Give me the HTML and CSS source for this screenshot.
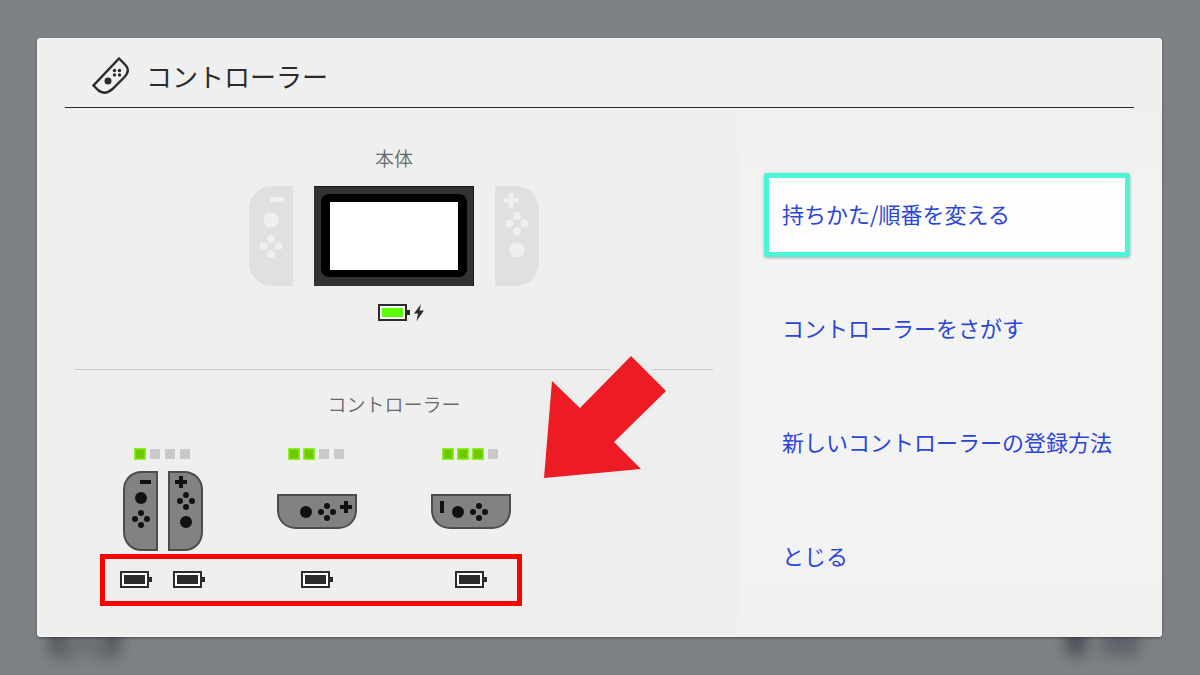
FILE: index.html
```
<!DOCTYPE html>
<html lang="ja">
<head>
<meta charset="UTF-8">
<meta name="viewport" content="width=device-width, initial-scale=1">
<title>コントローラー</title>
<link rel="stylesheet" href="styles.css">
</head>
<body>

<!-- shared shapes -->
<svg class="defs" width="0" height="0" aria-hidden="true">
  <symbol id="dpad" viewBox="0 0 18 18">
    <circle cx="9" cy="3" r="3"/><circle cx="3" cy="9" r="3"/>
    <circle cx="15" cy="9" r="3"/><circle cx="9" cy="15" r="3"/>
  </symbol>
  <symbol id="battery" viewBox="0 0 32 17">
    <rect x="1" y="1" width="27" height="15" fill="#fff" stroke="#2b2b2b" stroke-width="2"/>
    <rect x="29" y="6" width="3" height="5" fill="#2b2b2b"/>
    <rect x="4" y="4" width="21" height="9" fill="currentColor"/>
  </symbol>
</svg>

<div class="backdrop">
  <span class="smudge smudge-a"></span>
  <span class="smudge smudge-b"></span>
  <span class="smudge smudge-c"></span>
  <span class="smudge smudge-d"></span>
  <span class="smudge smudge-e"></span>
</div>

<div class="dialog" role="dialog" aria-labelledby="title">
  <header class="dialog-header">
    <svg class="header-icon" viewBox="0 0 38 38" width="38" height="38" aria-hidden="true">
      <path d="M27 1.500L33 7.500Q39 13.500 32 20.500L20.500 32Q12.500 39 6 33L1.500 28.500Z" fill="none" stroke="#2b2b2b" stroke-width="2.400"/>
      <circle cx="16" cy="24" r="3.500"/>
      <circle cx="22.500" cy="13.500" r="1.700"/><circle cx="27.500" cy="13.500" r="1.700"/>
      <circle cx="22.500" cy="18" r="1.700"/><circle cx="27.500" cy="18" r="1.700"/>
    </svg>
    <h1 id="title">コントローラー</h1>
  </header>

  <div class="dialog-body">
    <main class="status">
      <section class="console">
        <h2>本体</h2>
        <div class="console-row">
          <svg class="detached" viewBox="0 0 44 100" width="44" height="100">
            <path d="M44 0V100H24C10 100 0 90 0 76V24C0 10 10 0 24 0Z" fill="#e0e0e0"/>
            <g fill="#efefef">
              <rect x="21" y="11" width="14" height="5" rx="1"/>
              <circle cx="22" cy="34" r="7.500"/>
              <circle cx="22" cy="53" r="4"/><circle cx="14.500" cy="60" r="4"/>
              <circle cx="29.500" cy="60" r="4"/><circle cx="22" cy="68" r="4"/>
            </g>
          </svg>
          <svg class="screen" viewBox="0 0 160 100" width="160" height="100">
            <rect width="160" height="100" fill="#323232"/>
            <path d="M0 0.500H159.500V100" fill="none" stroke="#161616"/>
            <rect x="7" y="8" width="146" height="83" rx="8"/>
            <rect x="16" y="16" width="128" height="68" fill="#fff"/>
          </svg>
          <svg class="detached" viewBox="0 0 44 100" width="44" height="100">
            <path d="M0 0V100H20C34 100 44 90 44 76V24C44 10 34 0 20 0Z" fill="#e0e0e0"/>
            <g fill="#efefef">
              <path d="M13.500 7h5v5h5v4.500h-5v5h-5v-5h-5V12h5z"/>
              <circle cx="22" cy="30" r="4"/><circle cx="14.500" cy="37.500" r="4"/>
              <circle cx="29.500" cy="37.500" r="4"/><circle cx="22" cy="45" r="4"/>
              <circle cx="22" cy="64" r="7.500"/>
            </g>
          </svg>
        </div>
        <div class="charge">
          <svg class="battery battery-green" width="32" height="17"><use href="#battery"/></svg>
          <svg class="bolt" viewBox="0 0 10 17" width="10" height="17"><path d="M7 0L0 9.500H4L2.500 17L10 6.500H5.500Z" fill="#2b2b2b"/></svg>
        </div>
      </section>

      <section class="controllers">
        <h2>コントローラー</h2>
        <div class="players">
          <div class="player">
            <div class="leds"><i class="on"></i><i></i><i></i><i></i></div>
            <div class="pads">
              <svg viewBox="0 0 35 80" width="35" height="80">
                <path class="shell" d="M34 1V79H19C8 79 1 71 1 61V19C1 9 8 1 19 1Z"/>
                <rect x="17" y="9" width="11" height="4"/>
                <circle cx="18" cy="27" r="6"/>
                <use href="#dpad" x="9" y="39" width="18" height="18"/>
              </svg>
              <svg viewBox="0 0 35 80" width="35" height="80">
                <path class="shell" d="M1 1V79H16C27 79 34 71 34 61V19C34 9 27 1 16 1Z"/>
                <path d="M11 5h4v4h4v4h-4v4h-4v-4H7V9h4z"/>
                <use href="#dpad" x="9" y="21" width="18" height="18"/>
                <circle cx="18" cy="51" r="6"/>
              </svg>
            </div>
            <div class="batteries">
              <svg class="battery" width="32" height="17"><use href="#battery"/></svg>
              <svg class="battery" width="32" height="17"><use href="#battery"/></svg>
            </div>
          </div>

          <div class="player">
            <div class="leds"><i class="on"></i><i class="on"></i><i></i><i></i></div>
            <div class="pads">
              <svg viewBox="0 0 80 35" width="80" height="35">
                <path class="shell" d="M1 1H79V16C79 27 71 34 61 34H19C9 34 1 27 1 16Z"/>
                <circle cx="29" cy="18" r="6"/>
                <use href="#dpad" x="41" y="9" width="18" height="18"/>
                <path d="M67 7h4v4h4v4h-4v4h-4v-4h-4v-4h4z"/>
              </svg>
            </div>
            <div class="batteries">
              <svg class="battery" width="32" height="17"><use href="#battery"/></svg>
            </div>
          </div>

          <div class="player">
            <div class="leds"><i class="on"></i><i class="on"></i><i class="on"></i><i></i></div>
            <div class="pads">
              <svg viewBox="0 0 80 35" width="80" height="35">
                <path class="shell" d="M1 1H79V16C79 27 71 34 61 34H19C9 34 1 27 1 16Z"/>
                <rect x="9" y="7" width="4" height="12"/>
                <circle cx="27" cy="18" r="6"/>
                <use href="#dpad" x="39" y="9" width="18" height="18"/>
              </svg>
            </div>
            <div class="batteries">
              <svg class="battery" width="32" height="17"><use href="#battery"/></svg>
            </div>
          </div>

          <div class="highlight"></div>
          <svg class="arrow" viewBox="0 0 136 136" width="136" height="136" aria-hidden="true">
            <path d="M94 9L129 44L77 95L104 122L7 131L15 34L43 61Z"/>
          </svg>
        </div>
      </section>
    </main>

    <nav class="menu">
      <button type="button" class="menu-item selected">持ちかた/順番を変える</button>
      <button type="button" class="menu-item">コントローラーをさがす</button>
      <button type="button" class="menu-item">新しいコントローラーの登録方法</button>
      <button type="button" class="menu-item">とじる</button>
    </nav>
  </div>
</div>

</body>
</html>
```
FILE: styles.css
```
* {
  box-sizing: border-box;
}
body {
  margin: 0;
  min-height: 100vh;
  padding: 38px 38px 38px 37px;
  display: flex;
  position: relative;
  overflow: hidden;
  background: #7e8286;
  color: #2b2b2b;
  font-family: "Noto Sans CJK JP", "Noto Sans", sans-serif;
}
h1, h2 {
  margin: 0;
  font-weight: 350;
}
svg {
  display: block;
}
.defs {
  position: absolute;
}

/* blurred home screen behind the dialog */
.backdrop {
  position: absolute;
  inset: 0;
}
.smudge {
  position: absolute;
  bottom: 20px;
  width: 18px;
  height: 36px;
  background: #42474e;
  filter: blur(8px);
}
.smudge-a {
  left: 52px;
}
.smudge-b {
  left: 100px;
}
.smudge-c {
  left: 60px;
  width: 50px;
  height: 24px;
  background: #6b7075;
}
.smudge-d {
  right: 115px;
  height: 32px;
}
.smudge-e {
  right: 60px;
  width: 38px;
  height: 26px;
  background: #5c6167;
}

.dialog {
  position: relative;
  flex: 1;
  display: flex;
  flex-direction: column;
  background: #efefef;
  border-radius: 4px;
  box-shadow: 0 1px 3px rgba(0,0,0,0.4), inset 0 0 0 1px #f8f8f8;
}
.dialog-header {
  display: flex;
  align-items: center;
  gap: 16px;
  height: 70px;
  margin: 0 28px;
  padding: 6px 27px 0;
  border-bottom: 1px solid #2b2b2b;
}
.header-icon {
  fill: #2b2b2b;
}
h1 {
  font-size: 26px;
  font-weight: 400;
  line-height: 40px;
}
.dialog-body {
  flex: 1;
  display: grid;
  grid-template-columns: 5fr 3fr;
}

/* left side */
.status {
  padding: 0 27px 0 38px;
}
h2 {
  font-size: 19px;
  line-height: 28px;
  text-align: center;
  color: #6a6a6a;
}
.console {
  padding: 36px 0 48px;
  border-bottom: 1px solid #c9c9c9;
}
.console-row {
  display: flex;
  justify-content: center;
  gap: 21px;
  margin: 14px 0 18px;
}
.charge {
  display: flex;
  justify-content: center;
  gap: 4px;
  padding-left: 14px;
}
.battery {
  color: #2b2b2b;
}
.battery-green {
  color: #5aff00;
}
.controllers {
  padding-top: 20px;
}
.players {
  position: relative;
  display: grid;
  grid-template-columns: repeat(4, 1fr);
  padding: 0 11px;
  margin-top: 31px;
}
.player {
  display: flex;
  flex-direction: column;
  align-items: center;
}
.leds {
  display: flex;
  gap: 5px;
}
.leds i {
  width: 10px;
  height: 10px;
  background: #c9c9c9;
}
.leds .on {
  background: #72c800;
  box-shadow: inset 0 0 0 1px #76e600, 0 0 0 1px #8df02e;
}
.pads {
  display: flex;
  align-items: center;
  gap: 10px;
  height: 80px;
  margin: 12px 0 20px;
  fill: #111;
}
.shell {
  fill: #828282;
  stroke: #4d4d4d;
  stroke-width: 2;
}
.batteries {
  display: flex;
  gap: 21px;
}

/* annotations on top of the players */
.highlight {
  position: absolute;
  left: 25px;
  right: 191px;
  bottom: -18px;
  height: 52px;
  border: 5px solid #f00;
}
.arrow {
  position: absolute;
  right: 40px;
  bottom: 105px;
}
.arrow path {
  fill: #ed1c24;
  stroke: #ededed;
  stroke-width: 10;
  paint-order: stroke;
}

/* right side */
.menu {
  display: flex;
  flex-direction: column;
  gap: 30px;
  padding: 65px 32px 38px 24px;
  background: linear-gradient(#efefef, #f3f3f3 20%, #f3f3f3 80%, #f0f0f0);
  border-radius: 0 0 4px 0;
}
.menu-item {
  height: 84px;
  padding: 0 13px 4px;
  border: 5px solid transparent;
  border-radius: 3px;
  background: none;
  color: #2b46d8;
  font: 400 22px/32px "Noto Sans CJK JP", "Noto Sans", sans-serif;
  text-align: left;
  white-space: nowrap;
  cursor: pointer;
}
.menu-item.selected {
  background: #fdfdfd;
  border-color: #4cf5d7;
  box-shadow: 0 1px 3px rgba(0,0,0,0.3);
}
```
